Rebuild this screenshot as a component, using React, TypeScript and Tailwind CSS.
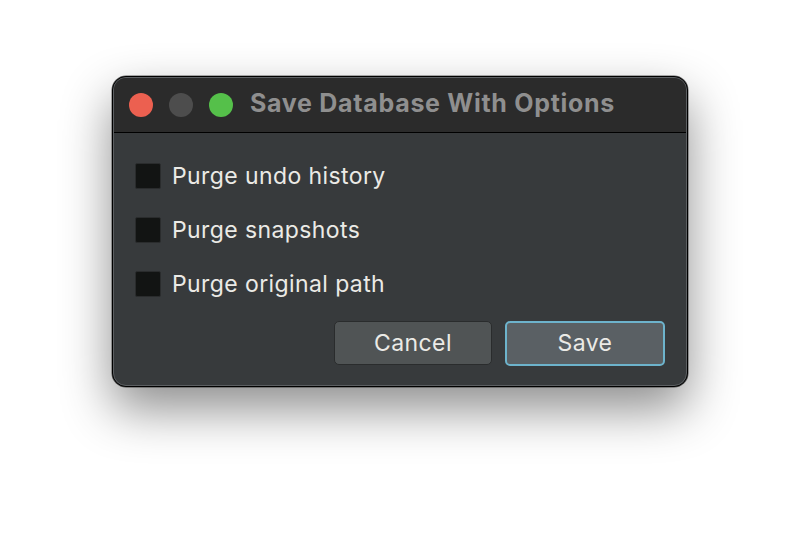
export default function App() {
  const options = ["Purge undo history", "Purge snapshots", "Purge original path"];

  return (
    <div
      className="w-[800px] h-[536px] bg-white flex items-start justify-center pt-[76px]"
      style={{ fontFamily: "Inter, 'Noto Sans', sans-serif" }}
    >
      <div className="w-[576px] h-[311px] rounded-[14px] border border-black bg-[#373a3c] shadow-[0_22px_50px_rgba(0,0,0,0.45),0_0_0_0.5px_rgba(0,0,0,0.6)] overflow-hidden flex flex-col">
        <div className="flex-1 flex flex-col rounded-[13px] border border-[#5c5f62] overflow-hidden">
          {/* title bar */}
          <div className="h-[55px] bg-[#2b2b2b] border-b border-black flex items-center pl-[15px] gap-[16px] shrink-0">
            <div className="flex gap-[16px]">
              <span className="w-[24px] h-[24px] rounded-full bg-[#ec6050]" />
              <span className="w-[24px] h-[24px] rounded-full bg-[#4d4d4d]" />
              <span className="w-[24px] h-[24px] rounded-full bg-[#55c04a]" />
            </div>
            <span className="text-[25px] font-bold text-[#8f8f8f] ml-[1px] tracking-[0.7px] -mt-[2px]">
              Save Database With Options
            </span>
          </div>

          {/* body */}
          <div className="flex-1 flex flex-col pl-[21px] pr-[21px] pt-[30px]">
            <div className="flex flex-col gap-[28px]">
              {options.map((o) => (
                <label key={o} className="flex items-center gap-[11px] h-[26px]">
                  <span className="w-[26px] h-[26px] bg-[#121413] border border-[#2a2c2d] rounded-[2px]" />
                  <span className="text-[23px] text-[#ebeae6] leading-none tracking-[0.4px]">{o}</span>
                </label>
              ))}
            </div>
            <div className="flex justify-end gap-[13px] mt-[24px]">
              <button className="w-[158px] h-[44px] rounded-[5px] border border-[#2a2c2d] bg-[#505455] text-[23px] text-[#ebeae6] tracking-[0.4px]">
                Cancel
              </button>
              <button className="w-[160px] h-[45px] rounded-[5px] border-2 border-[#6db3cc] bg-[#5a6064] text-[23px] text-[#ebeae6] tracking-[0.4px]">
                Save
              </button>
            </div>
          </div>
        </div>
      </div>
    </div>
  );
}
